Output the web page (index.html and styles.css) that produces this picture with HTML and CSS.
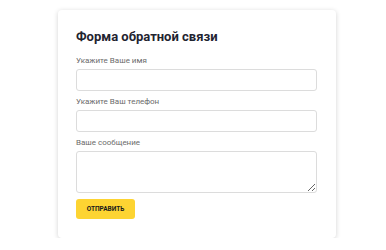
FILE: index.html
```html
<!DOCTYPE html>
<html lang="ru">
<head>
    <meta charset="UTF-8">
    <meta name="viewport" content="width=device-width, initial-scale=1.0">
    <title>Форма обратной связи</title>
    <link rel="stylesheet" href="styles.css">
</head>
<body>
    <form class="card">
        <h1>Форма обратной связи</h1>

        <label class="field">
            <span>Укажите Ваше имя</span>
            <input type="text">
        </label>

        <label class="field">
            <span>Укажите Ваш телефон</span>
            <input type="tel">
        </label>

        <label class="field">
            <span>Ваше сообщение</span>
            <textarea></textarea>
        </label>

        <button type="button" class="btn">Отправить</button>
    </form>
</body>
</html>
```

FILE: styles.css
```css
/* General Styles */
body {
    font-family: Roboto, "Noto Sans", sans-serif;
    margin: 0;
    background-color: #fff;
    display: flex;
    justify-content: center;
    padding: 10px 0 0 8px;
}

/* Card */
.card {
    width: 278px;
    box-sizing: border-box;
    padding: 18px 19px 19px 18px;
    background-color: #fff;
    border-radius: 4px;
    box-shadow: 0 1px 5px rgba(0, 0, 0, 0.18);
    display: flex;
    flex-direction: column;
}

h1 {
    margin: 0 0 10px;
    font-size: 13px;
    line-height: 18px;
    font-weight: 700;
    color: #1f2430;
}

/* Fields */
.field {
    display: flex;
    flex-direction: column;
    gap: 3px;
    margin-bottom: 6px;
}
.field span {
    font-size: 8px;
    line-height: 10px;
    color: #6b6b6b;
}
.field input,
.field textarea {
    box-sizing: border-box;
    width: 100%;
    height: 22px;
    border: 1px solid #dcdcdc;
    border-radius: 3px;
    font: inherit;
}
.field textarea {
    height: 42px;
    resize: vertical;
}

/* Button */
.btn {
    align-self: flex-start;
    width: 59px;
    height: 20px;
    padding: 0;
    border: none;
    border-radius: 3px;
    background-color: #fdd432;
    font-family: inherit;
    font-size: 6.5px;
    font-weight: 700;
    color: #1a1a1a;
    text-transform: uppercase;
}
```
